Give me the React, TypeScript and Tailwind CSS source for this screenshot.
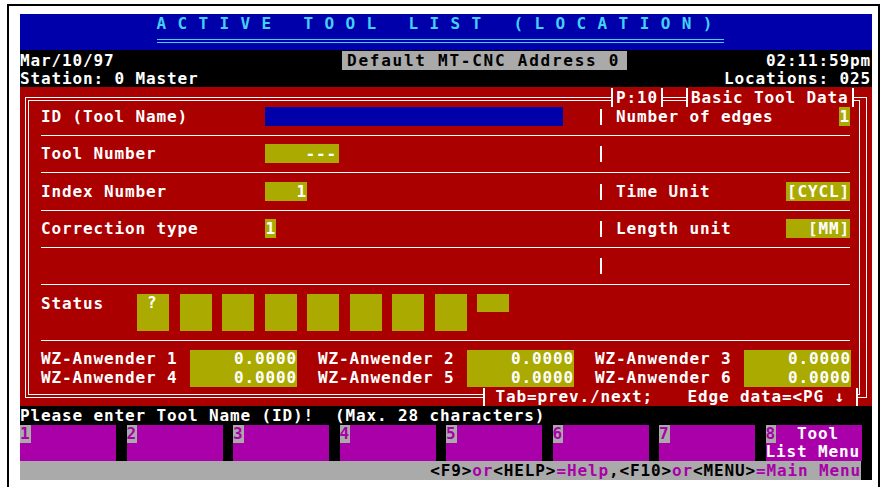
import React from 'react';

// 80x25 text-mode screen, rebuilt with flex rows
const font =
  "font-['DejaVu_Sans_Mono',monospace] font-bold text-[16px] tracking-[0.87px] whitespace-pre leading-none";

function Bar() {
  return (
    <div className="flex w-[2px] items-center">
      <div className="h-[16px] w-[2px] bg-white" />
    </div>
  );
}

function Rule({ className }: { className: string }) {
  return (
    <div className={`flex items-center ${className}`}>
      <div className="h-px w-full bg-white" />
    </div>
  );
}

function Value({ text, className }: { text: string; className: string }) {
  return (
    <div className={`flex items-center justify-end bg-[#aaaa00] text-white ${className}`}>
      {text}
    </div>
  );
}

type RowProps = {
  label?: string;
  field?: React.ReactNode;
  right?: string;
  value?: React.ReactNode;
};

function FormRow({ label, field, right, value }: RowProps) {
  return (
    <div className="flex h-[19px]">
      <div className="flex w-[559px]">
        <div className="flex w-[224px] items-center">{label}</div>
        {field}
      </div>
      <Bar />
      <div className="ml-[14px] flex flex-1 justify-between">
        <span className="flex items-center">{right}</span>
        {value}
      </div>
    </div>
  );
}

const keys = ['1', '2', '3', '4', '5', '6', '7'];

export default function App() {
  return (
    <div className={`h-[487px] w-[882px] overflow-hidden bg-white ${font}`}>
      <div className="ml-[7px] mt-[4px] h-[490px] w-[873px] border-2 border-b-0 border-black pl-[11px] pt-[8px]">
        <div className="w-[852px] bg-black text-white">
          {/* Title */}
          <div className="h-[36px] bg-[#0000aa]">
            <div className="flex h-[19px] items-center pl-[136.5px] text-[#44d0fa]">
              A C T I V E   T O O L   L I S T   ( L O C A T I O N )
            </div>
            <div className="ml-[136.5px] mt-[6px] h-[4px] w-[567px] border-y border-[#44d0fa]" />
          </div>

          {/* Date / station info */}
          <div className="h-[37px] pt-[1px]">
            <div className="flex h-[19px]">
              <div className="flex w-[322px] items-center">Mar/10/97</div>
              <div className="flex w-[285px] items-center bg-[#aaaaaa] pl-[5px] tracking-[1.75px] text-black">
                Default MT-CNC Address 0
              </div>
              <div className="flex flex-1 items-center justify-end pr-[1px]">02:11:59pm</div>
            </div>
            <div className="flex h-[17px] items-center justify-between pr-[1px]">
              <span>Station: 0 Master</span>
              <span>Locations: 025</span>
            </div>
          </div>

          {/* Tool data form */}
          <div className="h-[319px] bg-[#aa0000] pl-[5px] pt-[10px]">
            <div className="relative h-[301px] w-[842px] border border-white p-[2px] pr-[6px]">
              <div className="absolute left-[585px] top-[-10px] flex h-[19px] items-center border-x-2 border-white bg-[#aa0000] px-[3px]">
                P:10
              </div>
              <div className="absolute left-[660px] top-[-10px] flex h-[19px] items-center border-x-2 border-white bg-[#aa0000] px-[3px]">
                Basic Tool Data
              </div>
              <div className="absolute left-[457px] top-[290px] flex h-[18px] w-[375px] items-center justify-between border-x-2 border-white bg-[#aa0000] pr-[11px]">
                <span> Tab=prev./next;</span>
                <span>Edge data=&lt;PG ↓</span>
              </div>

              <div className="h-full border border-white pl-[12px] pr-[9px] pt-[6px]">
                <FormRow
                  label="ID (Tool Name)"
                  field={<div className="w-[298px] bg-[#0000aa]" />}
                  right="Number of edges"
                  value={<Value text="1" className="w-[11px]" />}
                />
                <Rule className="h-[18px]" />
                <FormRow label="Tool Number" field={<Value text="---" className="w-[74px] pr-[2px]" />} />
                <Rule className="h-[19px]" />
                <FormRow
                  label="Index Number"
                  field={<Value text="1" className="w-[42px]" />}
                  right="Time Unit"
                  value={<Value text="[CYCL]" className="w-[64px]" />}
                />
                <Rule className="h-[18px]" />
                <FormRow
                  label="Correction type"
                  field={<Value text="1" className="w-[11px]" />}
                  right="Length unit"
                  value={<Value text="[MM]" className="w-[64px]" />}
                />
                <Rule className="h-[18px]" />
                <FormRow />
                <Rule className="h-[19px]" />

                {/* Status flags */}
                <div className="flex h-[37px]">
                  <div className="flex h-[19px] w-[96px] items-center">Status</div>
                  <div className="flex items-start gap-[10.55px]">
                    {Array.from({ length: 8 }).map((_, i) => (
                      <div key={i} className="h-[37px] w-[32px] bg-[#aaaa00] pl-[10px]">
                        <div className="flex h-[18px] items-center">{i === 0 ? '?' : ''}</div>
                      </div>
                    ))}
                    <div className="h-[18px] w-[32px] bg-[#aaaa00]" />
                  </div>
                </div>
                <Rule className="h-[19px]" />

                {/* User values */}
                <div className="flex h-[37px] gap-[21px]">
                  {[
                    ['1', '4'],
                    ['2', '5'],
                    ['3', '6'],
                  ].map(([a, b]) => (
                    <div key={a} className="flex">
                      <div className="flex w-[149px] flex-col">
                        <div className="flex h-[18.5px] items-center">WZ-Anwender {a}</div>
                        <div className="flex h-[18.5px] items-center">WZ-Anwender {b}</div>
                      </div>
                      <div className="flex w-[107px] flex-col bg-[#aaaa00]">
                        <div className="flex h-[18.5px] items-center justify-end">0.0000</div>
                        <div className="flex h-[18.5px] items-center justify-end">0.0000</div>
                      </div>
                    </div>
                  ))}
                </div>
              </div>
            </div>
          </div>

          {/* Prompt line */}
          <div className="flex h-[19px] items-center">
            Please enter Tool Name (ID)!  (Max. 28 characters)
          </div>

          {/* Function keys */}
          <div className="flex h-[36px] gap-[10.5px]">
            {keys.map((k) => (
              <div key={k} className="w-[96px] bg-[#aa00aa]">
                <div className="flex h-[18px] w-[10.5px] items-center bg-[#aaaaaa] text-[#aa00aa]">{k}</div>
              </div>
            ))}
            <div className="w-[96px] bg-[#aa00aa]">
              <div className="flex h-[18px] items-center">
                <span className="flex h-full w-[10.5px] items-center bg-[#aaaaaa] text-[#aa00aa]">8</span>
                <span>  Tool</span>
              </div>
              <div className="flex h-[18px] items-center">List Menu</div>
            </div>
          </div>

          {/* Help line */}
          <div className="flex h-[19px] w-[841px] items-center justify-end bg-[#aaaaaa] text-black">
            &lt;F9&gt;<span className="text-[#aa00aa]">or</span>&lt;HELP&gt;
            <span className="text-[#aa00aa]">=Help</span>,&lt;F10&gt;
            <span className="text-[#aa00aa]">or</span>&lt;MENU&gt;
            <span className="text-[#aa00aa]">=Main Menu</span>
          </div>
        </div>
      </div>
    </div>
  );
}
